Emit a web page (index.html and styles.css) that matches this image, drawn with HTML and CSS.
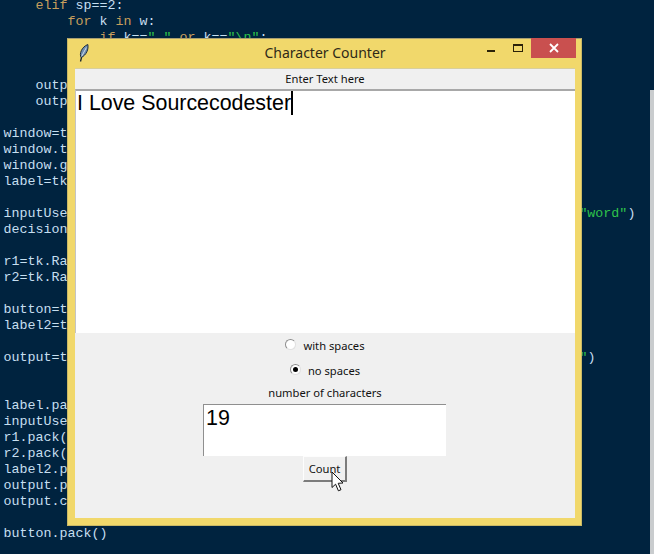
FILE: index.html
```html
<!DOCTYPE html>
<html lang="en">
<head>
<meta charset="utf-8">
<title>Character Counter</title>
<link rel="stylesheet" href="styles.css">
</head>
<body>
<pre class="code">    <b>elif</b> sp==2:
        <b>for</b> k <b>in</b> w:
            <b>if</b> k==<i>" "</i> <b>or</b> k==<i>"\n"</i>:
                count-=1

    output.insert(tk.END,count)
    output.configure(state="disabled")

window=tk.Tk()
window.title("Character Counter")
window.geometry("500x450")
label=tk.Label(window,text="Enter Text here")

inputUser=tk.Text(window,height=15,width=40,font=("Arial",16),bd=0,wrap=<i>"word"</i>)
decision=tk.IntVar()

r1=tk.Radiobutton(window,text="with spaces",variable=decision,value=1)
r2=tk.Radiobutton(window,text="no spaces",variable=decision,value=2)

button=tk.Button(window,text="Count",command=count)
label2=tk.Label(window,text="number of characters")

output=tk.Text(window,height=3,width=9,font=("Arial",16),state="disabled<i>"</i>)


label.pack()
inputUser.pack()
r1.pack()
r2.pack()
label2.pack()
output.pack()
output.config()

button.pack()</pre>
<div class="scrollbar"></div>
<main class="window">
  <header class="titlebar">
    <svg class="feather" width="12" height="20" viewBox="0 0 12 20" aria-hidden="true">
      <path d="M2.5 18.5 L3.6 14" stroke="#15202a" stroke-width="1.3" fill="none"/>
      <path d="M3.2 14.5 C1 11 3.5 4 9.8 1.5 C10.8 6 8.5 12 3.2 14.5 Z" fill="#6f8db0" stroke="#1d2c3d" stroke-width="1"/>
      <path d="M3.6 13.5 L8.4 4.5" stroke="#e6edf2" stroke-width=".8"/>
    </svg>
    <h1 class="title">Character Counter</h1>
    <div class="controls">
      <span class="minimize"></span>
      <span class="maximize"></span>
      <span class="close">
        <svg width="10" height="10" viewBox="0 0 10 10" aria-hidden="true"><path d="M1 1 L9 9 M9 1 L1 9" stroke="#fff" stroke-width="1.8"/></svg>
      </span>
    </div>
  </header>
  <section class="client">
    <div class="label top-label">Enter Text here</div>
    <div class="text-area"><span class="typed">I Love Sourcecodester</span><span class="caret"></span></div>
    <div class="radio-row"><span class="radio"></span><span>with spaces</span></div>
    <div class="radio-row"><span class="radio checked"></span><span>no spaces</span></div>
    <div class="label count-label">number of characters</div>
    <div class="output">19</div>
    <div class="button-row">
      <div class="button">Count
        <svg class="cursor" width="16" height="22" viewBox="0 0 16 22" aria-hidden="true"><path d="M1 1 L1 16.5 L4.6 13.2 L7.4 19.8 L10 18.7 L7.2 12.3 L12 12 Z" fill="#fff" stroke="#111" stroke-width="1"/></svg>
      </div>
    </div>
  </section>
</main>
</body>
</html>
```
FILE: styles.css
```css
html, body {
  margin: 0;
  padding: 0;
  width: 654px;
  height: 554px;
  overflow: hidden;
  background: #00233f;
}

.code {
  margin: 0;
  padding: 0 0 0 3.5px;
  position: relative;
  top: -2px;
  font: 13.33px/16px "Liberation Mono", monospace;
  color: #c6dff0;
  white-space: pre;
}

.code b {
  font-weight: normal;
  color: #c79f5c;
}

.code i {
  font-style: normal;
  color: #2fc24a;
}

.scrollbar {
  position: absolute;
  left: 650px;
  top: 90px;
  width: 4px;
  height: 464px;
  background: #c9ccce;
}

.window {
  position: absolute;
  left: 67px;
  top: 38px;
  width: 515px;
  height: 488px;
  box-sizing: border-box;
  background: #f1d86b;
  border: 1px solid #c9b866;
  border-top-color: #a89e72;
  display: flex;
  flex-direction: column;
  padding: 0 6px 7px 7px;
  font: 11.2px "Noto Sans", sans-serif;
  color: #111;
}

.titlebar {
  height: 29px;
  flex: none;
  position: relative;
  display: flex;
  justify-content: center;
  align-items: center;
}

.feather {
  position: absolute;
  left: 3px;
  top: 4px;
}

.title {
  margin: 0 0 2px;
  font: normal 14px "Noto Sans", sans-serif;
  color: #2f2a18;
}

.controls {
  position: absolute;
  right: -1px;
  top: -1px;
  display: flex;
  align-items: flex-start;
}

.minimize {
  width: 8px;
  height: 2px;
  background: #2b2208;
  margin: 12px 18px 0 0;
}

.maximize {
  width: 8px;
  height: 5px;
  border: 1px solid #2b2208;
  border-top-width: 2px;
  margin: 6px 8px 0 0;
}

.close {
  width: 45px;
  height: 20px;
  background: #c9504f;
  display: flex;
  align-items: center;
  justify-content: center;
}

.client {
  flex: 1;
  min-height: 0;
  background: #f0f0f0;
  border-top: 1px solid #d8cf9c;
  display: flex;
  flex-direction: column;
  align-items: center;
}

.label {
  line-height: 20px;
  text-align: center;
}

.top-label {
  height: 20px;
  flex: none;
}

.text-area {
  flex: none;
  box-sizing: border-box;
  align-self: stretch;
  height: 244px;
  background: #fff;
  border-top: 2px solid #a8a8a8;
  border-left: 1px solid #c4c4c4;
  padding-left: 1px;
  font: 21.4px/24px "Liberation Sans", sans-serif;
  color: #000;
  display: flex;
  align-items: flex-start;
}

.caret {
  width: 2px;
  height: 24px;
  background: #000;
}

.radio-row {
  height: 25px;
  flex: none;
  display: flex;
  align-items: center;
  gap: 7px;
}

.radio {
  width: 11px;
  height: 11px;
  box-sizing: border-box;
  border-radius: 50%;
  background: #fff;
  border: 1px solid #8d8d8d;
  border-right-color: #e0e0e0;
  border-bottom-color: #e0e0e0;
  position: relative;
  top: -1px;
}

.radio.checked::after {
  content: "";
  position: absolute;
  left: 2px;
  top: 2px;
  width: 5px;
  height: 5px;
  border-radius: 50%;
  background: #000;
}

.count-label {
  height: 21px;
  flex: none;
}

.output {
  width: 243px;
  height: 52px;
  margin-right: 1px;
  flex: none;
  box-sizing: border-box;
  background: #fff;
  border-top: 1px solid #8f8f8f;
  border-left: 1px solid #8f8f8f;
  padding-left: 2px;
  font: 21.4px/26px "Liberation Sans", sans-serif;
  color: #000;
}

.button-row {
  flex: none;
  display: flex;
  justify-content: center;
}

.button {
  position: relative;
  width: 44px;
  height: 26px;
  box-sizing: border-box;
  background: #f0f0f0;
  border: 1px solid #fdfdfd;
  border-right: 2px solid #7c7c7c;
  border-bottom: 2px solid #7c7c7c;
  text-align: center;
  line-height: 24px;
}

.cursor {
  position: absolute;
  left: 27px;
  top: 14px;
}
```
